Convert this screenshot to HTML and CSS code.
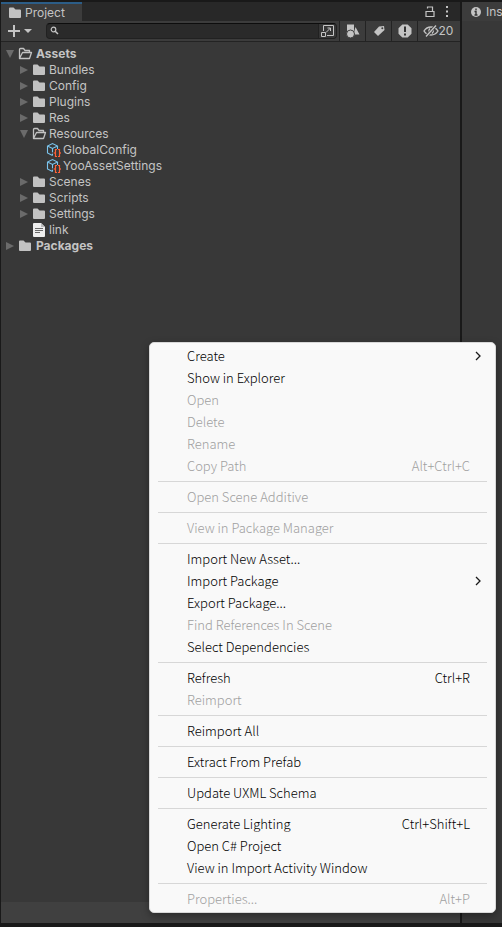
FILE: index.html
```html
<!DOCTYPE html>
<html lang="en">
<head>
<meta charset="utf-8">
<title>Project</title>
<link rel="stylesheet" href="styles.css">
</head>
<body>
<svg class="defs" aria-hidden="true">
  <symbol id="folder" viewBox="0 0 16 16"><path d="M2 3.500Q2 2.500 3 2.500H6.500L8.500 4.500H13Q14 4.500 14 5.500V12Q14 13 13 13H3Q2 13 2 12Z" fill="#c2c2c2"/></symbol>
  <symbol id="folder-open" viewBox="0 0 16 16"><path d="M2.500 12.500V3.500Q2.500 2.500 3.500 2.500H6.500L8 4.500H12.500V6.500M2.500 12.500L5.500 6.500H14.500L12.500 12.500H2.500Z" fill="none" stroke="#c2c2c2" stroke-width="1.300" stroke-linejoin="round"/></symbol>
  <symbol id="asset" viewBox="0 0 16 16">
    <path d="M7.500 13.500L2.500 11V4L7.500 1.500L12.500 4V7M2.500 4L7.500 6.500L12.500 4M7.500 6.500V13.500" fill="none" stroke="#7bc5ee" stroke-width="1.100"/>
    <path d="M11.500 7.500H10.500V10.500L9.500 11L10.500 11.500V14.500H11.500M13.500 7.500H14.500V10.500L15.500 11L14.500 11.500V14.500H13.500" fill="none" stroke="#383838" stroke-width="3"/>
    <path d="M12 7.500H10.500V10.500L9.500 11L10.500 11.500V14.500H12M13 7.500H14.500V10.500L15.500 11L14.500 11.500V14.500H13" fill="none" stroke="#ff6137" stroke-width="1.200"/>
  </symbol>
  <symbol id="file" viewBox="0 0 16 16"><path d="M3 1H10L14 5V14Q14 15 13 15H3Q2 15 2 14V2Q2 1 3 1Z" fill="#eee"/><path d="M10 1V5H14Z" fill="#bbb"/><path d="M4 6.500H12M4 8.500H12M4 10.500H9" stroke="#686868"/></symbol>
  <symbol id="right" viewBox="0 0 10 10"><path d="M1 1L9 5L1 9Z" fill="#6b6b6b"/></symbol>
  <symbol id="down" viewBox="0 0 10 10"><path d="M1 1H9L5 9Z" fill="#6b6b6b"/></symbol>
  <symbol id="chevron" viewBox="0 0 8 10"><path d="M2 1L6 5L2 9" fill="none" stroke="#1a1a1a" stroke-width="1.300"/></symbol>
</svg>
<div class="editor">
  <main class="panel">
    <header class="tabs">
      <button class="tab active"><svg class="icon"><use href="#folder"/></svg>Project</button>
      <div class="tab-tools">
        <button aria-label="Lock"><svg class="icon" viewBox="0 0 16 16"><path d="M4 7.500H12V12.500H4ZM5.500 4.500V3H10.500V7.500" fill="none" stroke="#c4c4c4" stroke-width="1.200"/></svg></button>
        <button aria-label="More"><svg class="icon" viewBox="0 0 16 16"><path d="M8 2h2v2H8zM8 6.500h2v2H8zM8 11h2v2H8z" fill="#c4c4c4"/></svg></button>
      </div>
    </header>
    <div class="toolbar">
      <button class="add" aria-label="Add"><svg class="add-icon" viewBox="0 0 28 16"><path d="M2 8H14M8 2V14" stroke="#c4c4c4" stroke-width="2"/><path d="M18 6H26L22 10Z" fill="#c4c4c4"/></svg></button>
      <div class="search">
        <svg class="icon" viewBox="0 0 16 16"><circle cx="6.500" cy="6.500" r="2.300" fill="none" stroke="#c4c4c4" stroke-width="1.200"/><path d="M8.200 8.200L11 11" stroke="#c4c4c4" stroke-width="1.500"/></svg>
        <input type="text" aria-label="Search assets">
        <button class="picker" aria-label="Open search"><svg class="icon" viewBox="0 0 16 16"><path d="M4.500 8V2.500H14.500V12.500H8" fill="none" stroke="#c4c4c4"/><path d="M2.500 9.500H6.500V13.500H2.500Z" fill="none" stroke="#c4c4c4"/><path d="M7 9.500L11.500 5M8.500 5H11.500V8" fill="none" stroke="#c4c4c4"/></svg></button>
      </div>
      <button class="tool" aria-label="Search by type"><svg class="icon" viewBox="0 0 16 16"><path d="M2 1.500H9V8H2ZM10.500 4L14.500 11.500H8.500Z" fill="#c4c4c4"/><circle cx="5.500" cy="11" r="4" fill="#c4c4c4" stroke="#3c3c3c"/></svg></button>
      <button class="tool" aria-label="Search by label"><svg class="icon" viewBox="0 0 16 16"><path d="M8 3.500L13 3L13.500 7L7 13L3 9Z" fill="#c4c4c4"/><circle cx="11.300" cy="5.200" r="1" fill="#3c3c3c"/></svg></button>
      <button class="tool" aria-label="Search by log"><svg class="icon" viewBox="0 0 16 16"><path d="M5.300 1.500H10.700L14.500 5.300V10.700L10.700 14.500H5.300L1.500 10.700V5.300Z" fill="#c4c4c4"/><path d="M8 3.500V9M8 10.500V12.500" stroke="#333" stroke-width="2"/></svg></button>
      <button class="tool hidden-count"><svg class="icon" viewBox="0 0 16 16"><path d="M1 8Q3.500 4 8 4T15 8Q12.500 12 8 12T1 8Z" fill="none" stroke="#c4c4c4" stroke-width="1.400"/><path d="M7 5.500Q5 8 7 10.500M10 6.500Q11 8 9 10.500" fill="none" stroke="#c4c4c4" stroke-width="1.500"/><path d="M3 13.500L13 2.500" stroke="#3c3c3c" stroke-width="3"/><path d="M3 13.500L13 2.500" stroke="#c4c4c4" stroke-width="1.400"/></svg>20</button>
    </div>
    <ul class="tree">
      <li class="root"><svg class="arrow"><use href="#down"/></svg><svg class="icon"><use href="#folder-open"/></svg>Assets</li>
      <li class="child"><svg class="arrow"><use href="#right"/></svg><svg class="icon"><use href="#folder"/></svg>Bundles</li>
      <li class="child"><svg class="arrow"><use href="#right"/></svg><svg class="icon"><use href="#folder"/></svg>Config</li>
      <li class="child"><svg class="arrow"><use href="#right"/></svg><svg class="icon"><use href="#folder"/></svg>Plugins</li>
      <li class="child"><svg class="arrow"><use href="#right"/></svg><svg class="icon"><use href="#folder"/></svg>Res</li>
      <li class="child"><svg class="arrow"><use href="#down"/></svg><svg class="icon"><use href="#folder-open"/></svg>Resources</li>
      <li class="leaf"><svg class="arrow"></svg><svg class="icon"><use href="#asset"/></svg>GlobalConfig</li>
      <li class="leaf"><svg class="arrow"></svg><svg class="icon"><use href="#asset"/></svg>YooAssetSettings</li>
      <li class="child"><svg class="arrow"><use href="#right"/></svg><svg class="icon"><use href="#folder"/></svg>Scenes</li>
      <li class="child"><svg class="arrow"><use href="#right"/></svg><svg class="icon"><use href="#folder"/></svg>Scripts</li>
      <li class="child"><svg class="arrow"><use href="#right"/></svg><svg class="icon"><use href="#folder"/></svg>Settings</li>
      <li class="child"><svg class="arrow"></svg><svg class="icon"><use href="#file"/></svg>link</li>
      <li class="root"><svg class="arrow"><use href="#right"/></svg><svg class="icon"><use href="#folder"/></svg>Packages</li>
    </ul>
    <footer class="status"></footer>
  </main>
  <aside class="inspector">
    <button class="inspector-tab"><svg class="icon" viewBox="0 0 16 16"><circle cx="8" cy="8" r="5" fill="#c4c4c4"/><path d="M8 4.500V6.200M6.500 7.500H8V11M6.500 11H9.500" fill="none" stroke="#333" stroke-width="1.400"/></svg>Ins</button>
  </aside>
</div>
<div class="menu" role="menu">
  <button role="menuitem">Create<svg class="chevron"><use href="#chevron"/></svg></button>
  <button role="menuitem">Show in Explorer</button>
  <button role="menuitem" disabled>Open</button>
  <button role="menuitem" disabled>Delete</button>
  <button role="menuitem" disabled>Rename</button>
  <button role="menuitem" disabled>Copy Path<span>Alt+Ctrl+C</span></button>
  <hr>
  <button role="menuitem" disabled>Open Scene Additive</button>
  <hr>
  <button role="menuitem" disabled>View in Package Manager</button>
  <hr>
  <button role="menuitem">Import New Asset...</button>
  <button role="menuitem">Import Package<svg class="chevron"><use href="#chevron"/></svg></button>
  <button role="menuitem">Export Package...</button>
  <button role="menuitem" disabled>Find References In Scene</button>
  <button role="menuitem">Select Dependencies</button>
  <hr>
  <button role="menuitem">Refresh<span>Ctrl+R</span></button>
  <button role="menuitem" disabled>Reimport</button>
  <hr>
  <button role="menuitem">Reimport All</button>
  <hr>
  <button role="menuitem">Extract From Prefab</button>
  <hr>
  <button role="menuitem">Update UXML Schema</button>
  <hr>
  <button role="menuitem">Generate Lighting<span>Ctrl+Shift+L</span></button>
  <button role="menuitem">Open C# Project</button>
  <button role="menuitem">View in Import Activity Window</button>
  <hr>
  <button role="menuitem" disabled>Properties...<span>Alt+P</span></button>
</div>
</body>
</html>
```
FILE: styles.css
```css
* { box-sizing: border-box; }
body { margin: 0; background: #191919; color: #c4c4c4; font: 12px/16px Inter, sans-serif; }
button { font: inherit; color: inherit; background: none; border: 0; padding: 0; display: flex; align-items: center; }
.defs { display: none; }
.icon { width: 16px; height: 16px; flex: none; }
.editor { display: flex; gap: 2px; height: 100vh; padding: 2px 0 4px 1px; }
.panel { flex: 1; display: flex; flex-direction: column; background: #383838; min-width: 0; }
.tabs { display: flex; justify-content: space-between; height: 19px; background: #282828; }
.tab { padding: 0 17px 0 6px; background: #3c3c3c; border-top: 2px solid #2c5d87; gap: 2px; }
.tab-tools { display: flex; padding-right: 6px; }
.toolbar { display: flex; height: 21px; background: #3c3c3c; border-bottom: 1px solid #232323; }
.add { padding: 0 12px 0 5px; }
.add-icon { width: 28px; height: 16px; }
.search { flex: 1; display: flex; align-items: center; min-width: 0; margin: 2px 2px 2px 0; background: #2a2a2a; border: 1px solid #212121; border-top-color: #0d0d0d; border-radius: 4px; overflow: hidden; }
.search input { flex: 1; min-width: 0; background: none; border: 0; outline: 0; color: inherit; font: inherit; padding: 0; }
.picker { width: 18px; height: 16px; background: #363636; border-left: 1px solid #212121; }
.tool { width: 26px; justify-content: center; border-left: 1px solid #232323; }
.hidden-count { width: 43px; padding-right: 2px; }
.tree { flex: 1; margin: 0; padding: 4px 0; list-style: none; }
.tree li { display: flex; align-items: center; gap: 2px; height: 16px; white-space: nowrap; }
.arrow { width: 10px; height: 10px; flex: none; }
.tree .root { padding-left: 4px; font-weight: bold; }
.root .icon { margin-right: 1px; }
.tree .child { padding-left: 18px; }
.tree .leaf { padding-left: 32px; }
.status { height: 21px; background: #404040; }
.inspector { width: 40px; background: #383838; overflow: hidden; }
.inspector-tab { width: 60px; height: 19px; padding-left: 6px; gap: 2px; background: #3c3c3c; }
.menu { position: absolute; left: 149px; top: 342px; width: 347px; padding: 2px 0; background: #f9f9f9; border: 1px solid #d8d8d8; border-radius: 5px; box-shadow: 0 3px 8px #0005; color: #000; font: 300 13px/22px "Noto Sans CJK SC", sans-serif; }
.menu button { width: 100%; height: 22px; padding: 0 25px 0 37px; justify-content: space-between; }
.menu button:disabled { color: #a0a0a0; }
.menu hr { height: 1px; margin: 4px 8px; border: 0; background: #d7d7d7; }
.chevron { width: 8px; height: 10px; margin-right: -12px; }
```
